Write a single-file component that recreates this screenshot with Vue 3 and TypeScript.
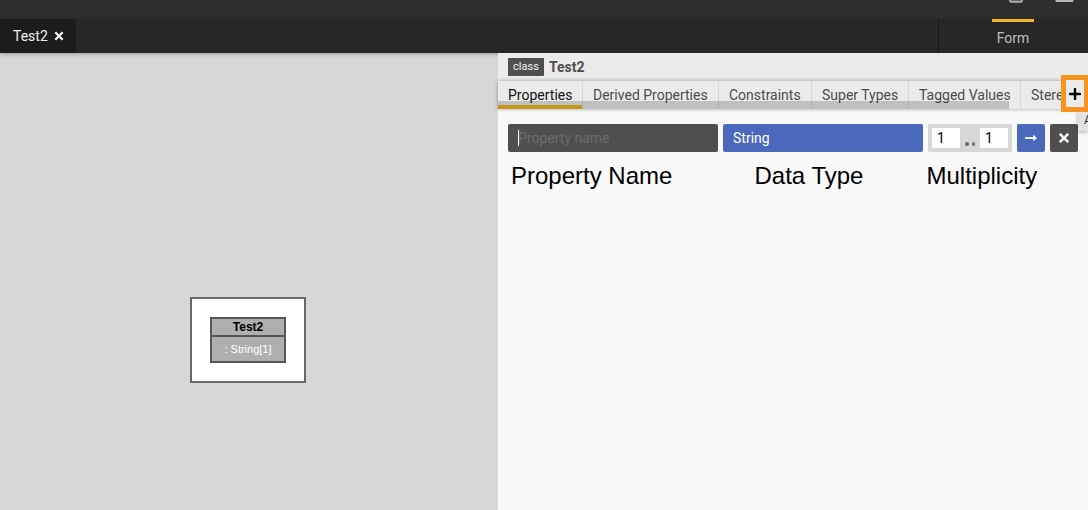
<script setup lang="ts">
import { ref } from 'vue'

interface Tab {
  label: string
  width: number
}

const tabs: Tab[] = [
  { label: 'Properties', width: 85 },
  { label: 'Derived Properties', width: 136 },
  { label: 'Constraints', width: 93 },
  { label: 'Super Types', width: 97 },
  { label: 'Tagged Values', width: 112 },
  { label: 'Stereotypes', width: 100 },
]
const active = ref('Properties')
const lower = ref('1')
const upper = ref('1')
</script>

<template>
  <div class="app">
    <div class="topbar">
      <svg class="top-icons" width="70" height="4" viewBox="0 0 70 4">
        <path d="M1 -4V0.2Q1 2 3 2H11Q13 2 13 0.2V-4" fill="#686868" stroke="#b4b4b4" stroke-width="1.6" />
        <path d="M46.500 0H64.500V1.300Q64.500 2 63.500 2H47.500Q46.500 2 46.500 1.300Z" fill="#b4b4b4" />
      </svg>
    </div>
    <div class="tabbar">
      <div class="file-tab">
        <span>Test2</span>
        <svg class="close" width="10" height="10" viewBox="0 0 10 10">
          <path d="M1.300 1.300L8.700 8.700M8.700 1.300L1.300 8.700" stroke="#f0f0f0" stroke-width="2.300" />
        </svg>
      </div>
      <div class="side-head">
        <div class="form-tab">Form</div>
      </div>
    </div>
    <div class="main">
      <div class="canvas">
        <div class="node-frame">
          <div class="node">
            <div class="node-title">Test2</div>
            <div class="node-body">: String[1]</div>
          </div>
        </div>
      </div>
      <div class="panel">
        <div class="panel-title">
          <span class="badge">class</span>
          <span class="name">Test2</span>
        </div>
        <div class="tabs">
          <div
            v-for="tab in tabs"
            :key="tab.label"
            class="tab"
            :class="{ active: tab.label === active }"
            :style="{ width: tab.width + 'px' }"
            @click="active = tab.label"
          >{{ tab.label }}</div>
          <div class="scroll-thumb"></div>
        </div>
        <button class="add">
          <svg width="12" height="12" viewBox="0 0 12 12">
            <path d="M6 1V11M1 6H11" stroke="#000" stroke-width="2.400" stroke-linecap="round" />
          </svg>
        </button>
        <div class="tip">Add</div>
        <div class="row">
          <div class="prop"><i class="caret"></i>Property name</div>
          <div class="type">String</div>
          <div class="mult">
            <span class="num">{{ lower }}</span>
            <span class="dots"><i></i><i></i></span>
            <span class="num">{{ upper }}</span>
          </div>
          <div class="btn blue">
            <svg width="14" height="10" viewBox="0 0 14 10">
              <path d="M1 5H10" stroke="#fff" stroke-width="1.800" />
              <path d="M9.200 1.700L13 5L9.200 8.300Z" fill="#fff" />
            </svg>
          </div>
          <div class="btn dark">
            <svg width="12" height="12" viewBox="0 0 12 12">
              <path d="M1.800 1.800L10.200 10.200M10.200 1.800L1.800 10.200" stroke="#fff" stroke-width="2.500" />
            </svg>
          </div>
        </div>
        <div class="captions">
          <span class="c1">Property Name</span>
          <span class="c2">Data Type</span>
          <span class="c3">Multiplicity</span>
        </div>
      </div>
    </div>
  </div>
</template>

<style>
body {
  margin: 0;
  overflow: hidden;
}
</style>

<style scoped>
.app {
  width: 1088px;
  height: 510px;
  overflow: hidden;
  display: flex;
  flex-direction: column;
  font-family: Roboto, sans-serif;
  font-size: 14px;
}
.app * {
  box-sizing: border-box;
}
svg {
  display: block;
  flex: none;
}
.topbar {
  height: 19px;
  background: #2e2e2e;
  display: flex;
  justify-content: flex-end;
}
.top-icons {
  margin-right: 9px;
}
.tabbar {
  height: 34px;
  background: #272727;
  display: flex;
  justify-content: space-between;
  position: relative;
  z-index: 1;
  box-shadow: 0 1px 4px rgba(0, 0, 0, 0.3);
}
.file-tab {
  width: 76px;
  background: #1c1c1c;
  color: #f0f0f0;
  display: flex;
  align-items: center;
  padding-left: 13px;
}
.close {
  margin-left: 6px;
}
.side-head {
  width: 150px;
  border-left: 1px solid #181818;
  padding-left: 53px;
}
.form-tab {
  width: 42px;
  height: 34px;
  border-top: 3px solid #f0b828;
  color: #bebebe;
  line-height: 33px;
  text-align: center;
}
.main {
  flex: 1;
  display: flex;
}
.canvas {
  width: 498px;
  background: #d7d7d7;
  padding: 244px 0 0 190px;
}
.node-frame {
  width: 116px;
  height: 86px;
  background: #fff;
  border: 2px solid #696969;
  padding: 18px;
}
.node {
  height: 46px;
  border: 2px solid #555;
  background: #afafaf;
  font: 11px/18px "Liberation Sans", Arial, sans-serif;
  text-align: center;
}
.node-title {
  height: 18px;
  line-height: 17px;
  border-bottom: 2px solid #555;
  font-size: 12px;
  font-weight: 700;
  color: #000;
}
.node-body {
  line-height: 25px;
  color: #fff;
}
.panel {
  width: 590px;
  background: #f9f9f9;
  position: relative;
  z-index: 2;
}
.panel-title {
  height: 28px;
  background: #ebebeb;
  display: flex;
  padding: 5px 10px;
}
.badge {
  width: 36px;
  height: 18px;
  border-radius: 1px;
  background: #4f4f4f;
  color: #f2f2f2;
  font-size: 11px;
  line-height: 17px;
  text-align: center;
}
.name {
  margin-left: 5px;
  line-height: 18px;
  font-weight: 700;
  color: #4d4d4d;
}
.tabs {
  height: 28px;
  background: #ebebeb;
  display: flex;
  overflow: hidden;
  position: relative;
  box-shadow: 0 0 4px rgba(0, 0, 0, 0.35);
}
.tab {
  flex: none;
  padding-left: 10px;
  border-right: 1px solid #d7d7d7;
  color: #4b4b4b;
  line-height: 28px;
  white-space: nowrap;
}
.tab.active {
  color: #111;
  box-shadow: inset 0 -4px #f3b91f;
}
.scroll-thumb {
  position: absolute;
  left: 0;
  bottom: 0;
  width: 511px;
  height: 8px;
  background: rgba(0, 0, 0, 0.18);
}
.add {
  position: absolute;
  left: 563px;
  top: 22px;
  width: 27px;
  height: 37px;
  padding: 0 0 0 3px;
  border: 5px solid #f7931e;
  border-right-width: 4px;
  background: #ebebeb;
  display: flex;
  align-items: center;
  justify-content: flex-start;
  z-index: 2;
}
.tip {
  position: absolute;
  left: 580px;
  top: 58px;
  width: 10px;
  height: 20px;
  overflow: hidden;
  padding-left: 6px;
  background: #e3e3e3;
  box-shadow: 0 1px 4px rgba(0, 0, 0, 0.35);
  color: #333;
  font-size: 12px;
  line-height: 18px;
}
.row {
  display: flex;
  gap: 5px;
  padding: 15px 10px 0;
  height: 43px;
}
.prop,
.type,
.mult,
.btn {
  height: 28px;
  border-radius: 2px;
}
.prop {
  width: 210px;
  padding-left: 10px;
  background: #4f4f4f;
  color: #6c6c6c;
  line-height: 28px;
  position: relative;
}
.caret {
  position: absolute;
  left: 10px;
  top: 6px;
  width: 1px;
  height: 16px;
  background: #fff;
}
.type {
  width: 200px;
  padding-left: 10px;
  background: #4b69bc;
  color: #fff;
  line-height: 28px;
}
.mult {
  width: 84px;
  padding: 4px;
  background: #d7d7d7;
  display: flex;
}
.num {
  width: 28px;
  height: 20px;
  padding-left: 5px;
  background: #fff;
  color: #000;
  line-height: 20px;
}
.dots {
  width: 20px;
  display: flex;
  gap: 3px;
  padding: 14px 5px 0;
}
.dots i {
  width: 3.5px;
  height: 3.5px;
  border-radius: 50%;
  background: #707070;
}
.btn {
  width: 28px;
  display: flex;
  align-items: center;
  justify-content: center;
}
.blue {
  background: #4b69bc;
}
.dark {
  background: #4f4f4f;
}
.captions {
  display: grid;
  grid-template-columns: 243.5px 172px 1fr;
  padding: 10px 0 0 13px;
  font: 24px/28px "Liberation Sans", Helvetica, sans-serif;
  color: #000;
  white-space: nowrap;
}
</style>
